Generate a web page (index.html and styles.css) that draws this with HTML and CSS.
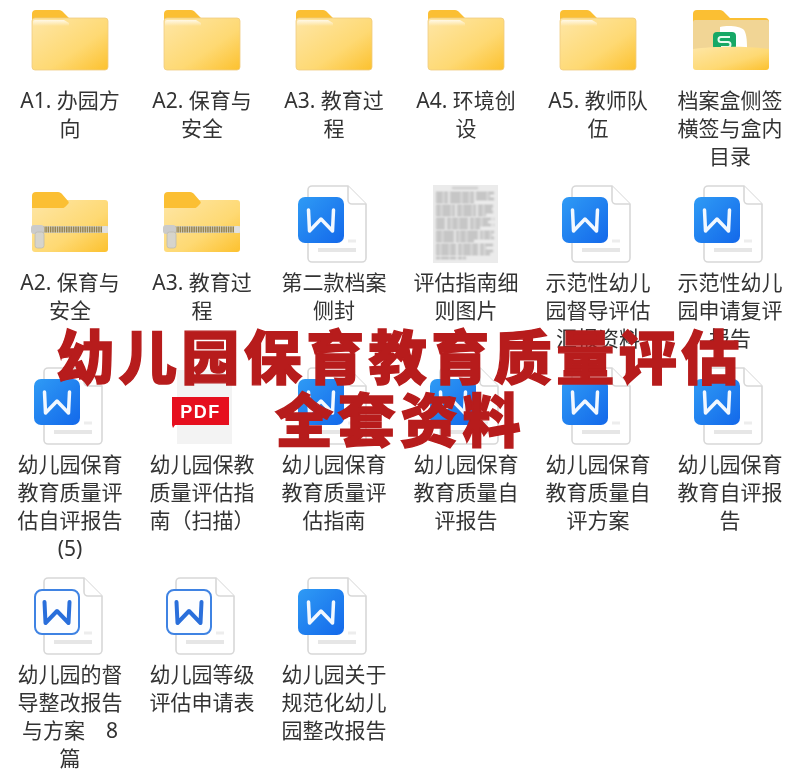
FILE: index.html
```html
<!DOCTYPE html>
<html lang="zh-CN">
  <head>
    <meta charset="UTF-8" />
    <meta name="viewport" content="width=device-width, initial-scale=1.0" />
    <title>幼儿园保育教育质量评估全套资料</title>
    <link rel="stylesheet" href="styles.css">
  </head>
  <body>
    <svg class="icon-defs" xmlns="http://www.w3.org/2000/svg">
      <defs>
        <linearGradient id="folderFill" x1="0" y1="0" x2="1" y2="1">
          <stop offset="0" stop-color="#fee6a6" />
          <stop offset="0.6" stop-color="#fed973" />
          <stop offset="1" stop-color="#fcc12e" />
        </linearGradient>
        <linearGradient id="folderShine" x1="0" y1="0" x2="0" y2="1">
          <stop offset="0" stop-color="#fff8e6" />
          <stop offset="1" stop-color="#fff8e6" stop-opacity="0" />
        </linearGradient>
        <linearGradient id="wordFill" x1="0" y1="0" x2="1" y2="1">
          <stop offset="0" stop-color="#2f9bf5" />
          <stop offset="1" stop-color="#1368ea" />
        </linearGradient>

        <symbol id="folder" viewBox="0 0 80 78">
          <path d="M2 11a4 4 0 0 1 4-4h23c2 0 3 1 4 2l6 6h35a4 4 0 0 1 4 4v10H2z" fill="#fbbf33" />
          <rect x="2" y="15" width="76" height="52" rx="3" fill="url(#folderFill)" stroke="#f0cb80" stroke-width="0.8" />
          <path d="M3 23v-4a2 2 0 0 1 2-2h29l5 3v3z" fill="url(#folderShine)" />
        </symbol>

        <symbol id="zip-folder" viewBox="0 0 80 78">
          <rect x="2" y="15" width="76" height="52" rx="3" fill="url(#folderFill)" />
          <path d="M2 11a4 4 0 0 1 4-4h22c2 0 3 1 4 2l6 7c1 1 1 2 0 3l-3 3c-1 1-2 1-3 1H2z" fill="#fbbf33" />
          <rect x="2" y="41" width="76" height="7" fill="#d9d5c6" />
          <path d="M13 44.500H72" stroke="#96834f" stroke-width="6" stroke-dasharray="1.500 0.800" />
          <rect x="1" y="40" width="13" height="9" rx="3" fill="#cbcbcb" />
          <rect x="5" y="47" width="9" height="16" rx="2.500" fill="#d6d4cc" stroke="#bcbab0" stroke-width="0.8" />
          <rect x="72" y="41" width="6" height="7" rx="2" fill="#e0e0e0" />
        </symbol>

        <symbol id="box-folder" viewBox="0 0 80 78">
          <path d="M3 11a4 4 0 0 1 4-4h23c2 0 3 1 4 2l6 6h35a4 4 0 0 1 4 4v10H3z" fill="#fbbf33" />
          <rect x="3" y="17" width="76" height="36" rx="2" fill="#f1d595" />
          <path d="M30 24c8-2 20-1 24 3 2 3 3 8 3 18H30z" fill="#ffffff" />
          <rect x="23" y="29" width="23" height="18" rx="4" fill="#16a866" />
          <path d="M40 34H31a2.500 2.500 0 0 0 0 5h7a2.500 2.500 0 0 1 0 5h-7" fill="none" stroke="#e8fbf1" stroke-width="2" />
          <path d="M3 46c20-3 56-3 76 0v18a3 3 0 0 1-3 3H6a3 3 0 0 1-3-3z" fill="url(#folderFill)" />
        </symbol>

        <symbol id="page" viewBox="0 0 80 78">
          <path d="M18 1h36l18 18v54a4 4 0 0 1-4 4H18a4 4 0 0 1-4-4V5a4 4 0 0 1 4-4z" fill="#fff" stroke="#d8d8d8" stroke-width="1.600" />
          <path d="M54 1v14a4 4 0 0 0 4 4h14" fill="#fff" stroke="#d8d8d8" stroke-width="1.600" />
          <path d="M54 56h8" stroke="#ededed" stroke-width="3" />
          <path d="M24 65h38" stroke="#e6e6e6" stroke-width="4" />
        </symbol>

        <symbol id="word" viewBox="0 0 80 78">
          <use href="#page" width="80" height="78" />
          <rect x="4" y="12" width="46" height="46" rx="7" fill="url(#wordFill)" />
          <path d="M14.500 25l1 21L27 34l11.500 12 1-21" fill="none" stroke="#f2f8ff" stroke-width="3.500" stroke-linejoin="round" stroke-linecap="round" />
        </symbol>

        <symbol id="word-outline" viewBox="0 0 80 78">
          <use href="#page" width="80" height="78" />
          <rect x="5" y="13" width="44" height="44" rx="7" fill="#fdfeff" stroke="#3f83e3" stroke-width="2" />
          <path d="M14.500 25l1 21L27 34l11.500 12 1-21" fill="none" stroke="#2a6fdb" stroke-width="4" stroke-linejoin="round" stroke-linecap="round" />
        </symbol>
      </defs>
    </svg>

    <main class="file-grid">
      <div class="file-item">
        <svg class="file-icon"><use href="#folder" /></svg>
        <div class="file-name">A1. 办园方向</div>
      </div>
      <div class="file-item">
        <svg class="file-icon"><use href="#folder" /></svg>
        <div class="file-name">A2. 保育与安全</div>
      </div>
      <div class="file-item">
        <svg class="file-icon"><use href="#folder" /></svg>
        <div class="file-name">A3. 教育过程</div>
      </div>
      <div class="file-item">
        <svg class="file-icon"><use href="#folder" /></svg>
        <div class="file-name">A4. 环境创设</div>
      </div>
      <div class="file-item">
        <svg class="file-icon"><use href="#folder" /></svg>
        <div class="file-name">A5. 教师队伍</div>
      </div>
      <div class="file-item">
        <svg class="file-icon"><use href="#box-folder" /></svg>
        <div class="file-name">档案盒侧签横签与盒内目录</div>
      </div>

      <div class="file-item">
        <svg class="file-icon"><use href="#zip-folder" /></svg>
        <div class="file-name">A2. 保育与安全</div>
      </div>
      <div class="file-item">
        <svg class="file-icon"><use href="#zip-folder" /></svg>
        <div class="file-name">A3. 教育过程</div>
      </div>
      <div class="file-item">
        <svg class="file-icon"><use href="#word" /></svg>
        <div class="file-name">第二款档案侧封</div>
      </div>
      <div class="file-item">
        <svg class="file-icon" viewBox="0 0 80 78">
          <rect x="7" y="0" width="65" height="78" fill="#ebebeb" />
          <g class="scan-lines" fill="none" stroke="#a2a2a2" stroke-width="1.600">
            <path d="M26 3h26" stroke-width="1" />
            <path d="M10 8h58M10 11h54M10 14h58M10 17h40" stroke-dasharray="7 1 4 2 11 1" />
            <path d="M10 21h58M10 24h56M10 27h58M10 30h50" stroke-dasharray="5 1 9 1 3 2" />
            <path d="M10 34h58M10 37h52M10 40h58M10 43h44" stroke-dasharray="9 2 4 1 6 1" />
            <path d="M10 47h58M10 50h56M10 53h58M10 56h38" stroke-dasharray="6 1 11 2 3 1" />
            <path d="M10 60h58M10 63h50M10 66h58M10 69h54M10 73h30" stroke-dasharray="4 1 8 1 6 2" />
          </g>
        </svg>
        <div class="file-name">评估指南细则图片</div>
      </div>
      <div class="file-item">
        <svg class="file-icon"><use href="#word" /></svg>
        <div class="file-name">示范性幼儿园督导评估汇报资料</div>
      </div>
      <div class="file-item">
        <svg class="file-icon"><use href="#word" /></svg>
        <div class="file-name">示范性幼儿园申请复评报告</div>
      </div>

      <div class="file-item">
        <svg class="file-icon"><use href="#word" /></svg>
        <div class="file-name">幼儿园保育教育质量评估自评报告(5)</div>
      </div>
      <div class="file-item">
        <svg class="file-icon" viewBox="0 0 80 78">
          <path d="M15 3h44l11 11v63H15z" fill="#f3f3f3" />
          <path d="M59 3v8a3 3 0 0 0 3 3h8" fill="#e4e4e4" />
          <path d="M10 30h57v28H13l-2 3-1-3z" fill="#e60f1e" />
          <text class="pdf-label" x="38.500" y="50.500" text-anchor="middle">PDF</text>
        </svg>
        <div class="file-name">幼儿园保教质量评估指南（扫描）</div>
      </div>
      <div class="file-item">
        <svg class="file-icon"><use href="#word" /></svg>
        <div class="file-name">幼儿园保育教育质量评估指南</div>
      </div>
      <div class="file-item">
        <svg class="file-icon"><use href="#word" /></svg>
        <div class="file-name">幼儿园保育教育质量自评报告</div>
      </div>
      <div class="file-item">
        <svg class="file-icon"><use href="#word" /></svg>
        <div class="file-name">幼儿园保育教育质量自评方案</div>
      </div>
      <div class="file-item">
        <svg class="file-icon"><use href="#word" /></svg>
        <div class="file-name">幼儿园保育教育自评报告</div>
      </div>

      <div class="file-item">
        <svg class="file-icon"><use href="#word-outline" /></svg>
        <div class="file-name">幼儿园的督导整改报告与方案　8篇</div>
      </div>
      <div class="file-item">
        <svg class="file-icon"><use href="#word-outline" /></svg>
        <div class="file-name">幼儿园等级评估申请表</div>
      </div>
      <div class="file-item">
        <svg class="file-icon"><use href="#word" /></svg>
        <div class="file-name">幼儿园关于规范化幼儿园整改报告</div>
      </div>
    </main>

    <h1 class="banner-title">幼儿园保育教育质量评估<br />全套资料</h1>
  </body>
</html>
```

FILE: styles.css
```css
body {
  margin: 0;
  background-color: #fff;
  font-family: "Noto Sans", "Noto Sans CJK SC", sans-serif;
}

.icon-defs {
  display: block;
  width: 0;
  height: 0;
}

.file-grid {
  display: grid;
  grid-template-columns: repeat(6, 132px);
  row-gap: 15px;
  align-items: start;
  padding: 3px 0 0 4px;
  filter: blur(0.4px);
}

.file-item {
  display: flex;
  flex-direction: column;
  align-items: center;
}

.file-icon {
  display: block;
  width: 80px;
  height: 78px;
  margin-bottom: 5px;
}

.file-name {
  width: 112px;
  font-size: 21px;
  line-height: 28px;
  color: #333;
  text-align: center;
  word-break: break-all;
}

.scan-lines {
  filter: blur(0.9px);
}

.pdf-label {
  font-family: "Liberation Sans", sans-serif;
  font-size: 18px;
  font-weight: bold;
  letter-spacing: 1.5px;
  fill: #fff;
}

.banner-title {
  position: absolute;
  top: 323px;
  left: 0;
  width: 100%;
  margin: 0;
  font-family: "Noto Sans CJK SC", sans-serif;
  font-size: 58px;
  font-weight: 900;
  line-height: 63px;
  letter-spacing: 4.5px;
  color: #b71c1c;
  -webkit-text-stroke: 1.4px #b71c1c;
  text-align: center;
}
```
